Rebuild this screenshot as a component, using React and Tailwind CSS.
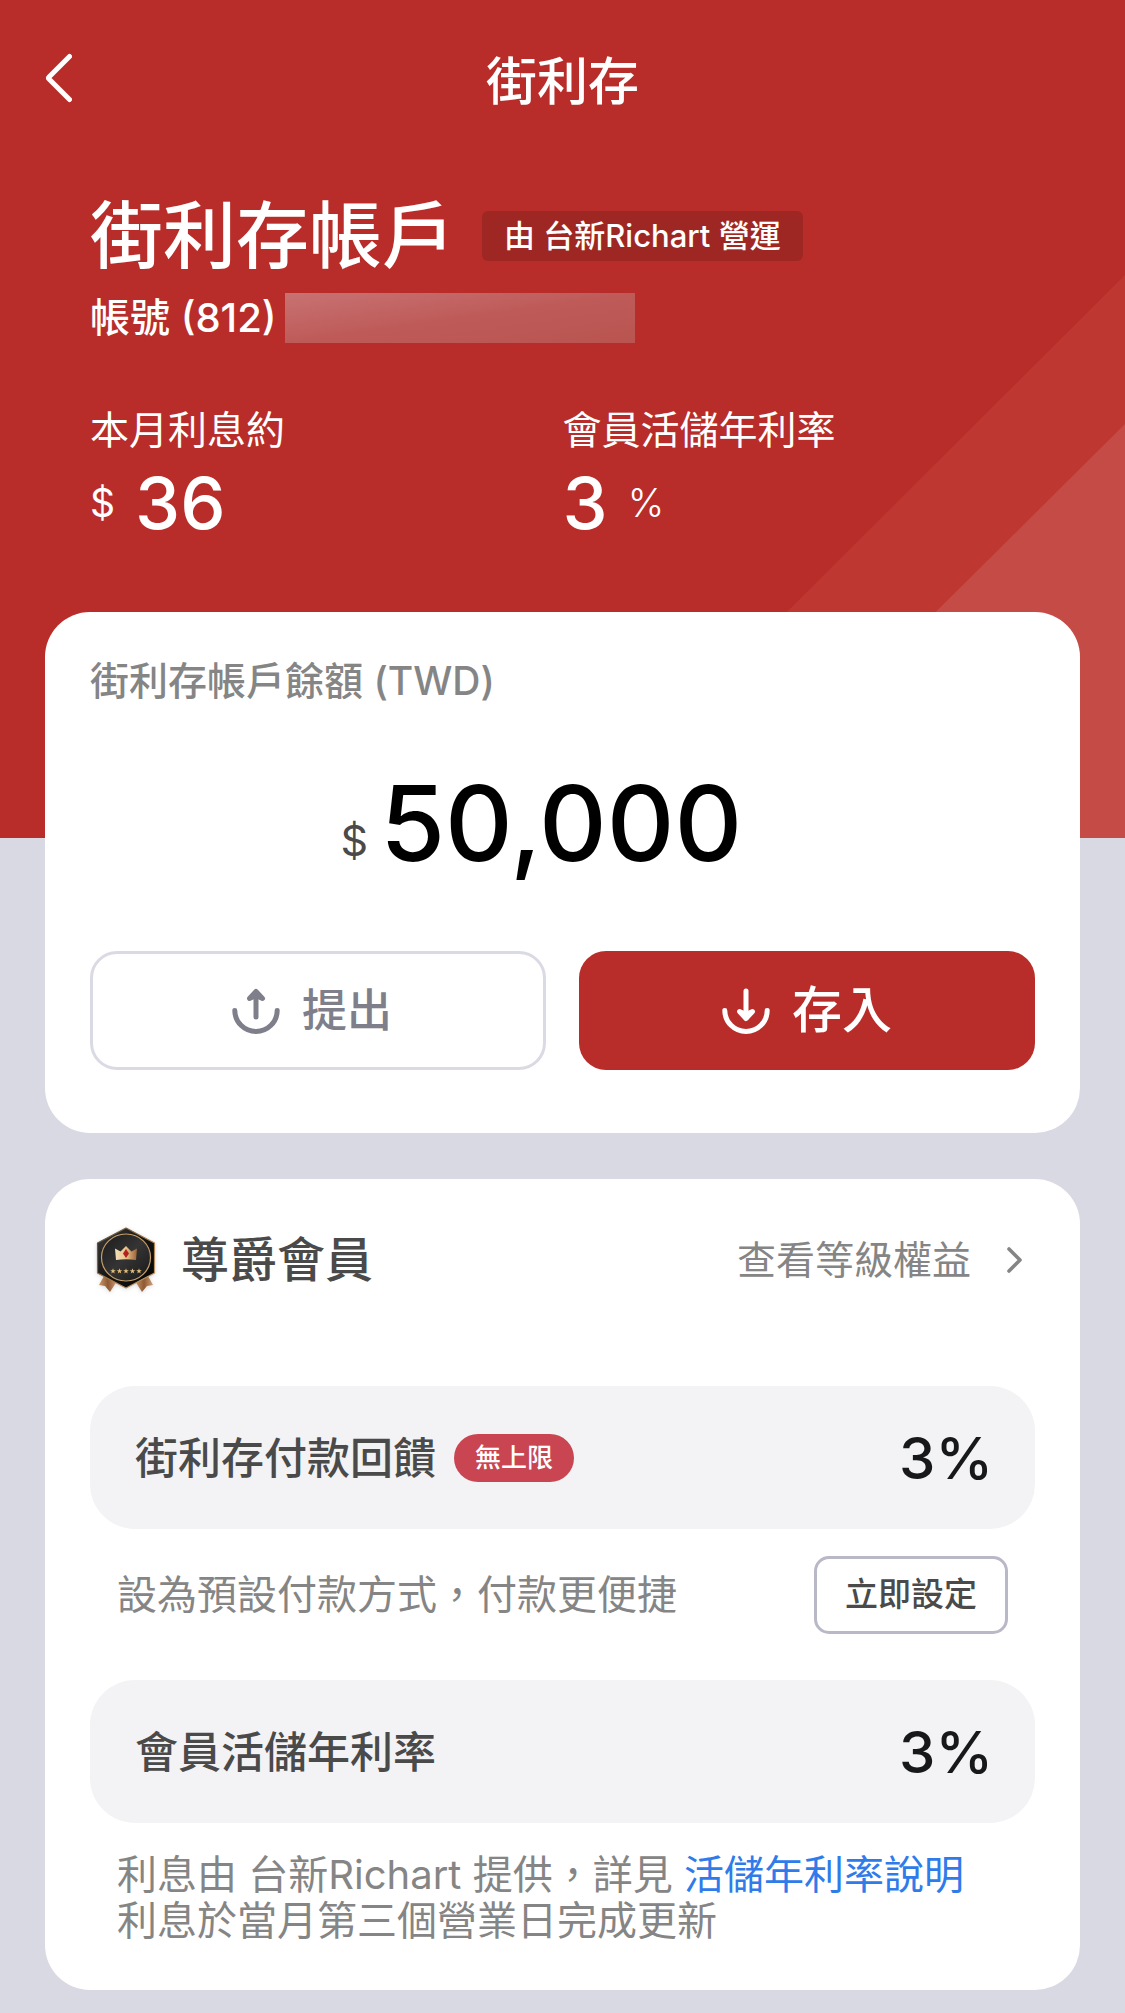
import React from 'react';

const BackIcon = () => (
  <svg viewBox="0 0 28 50" className="w-7 h-[50px]" fill="none" stroke="currentColor" strokeWidth="5" strokeLinecap="round" strokeLinejoin="round" aria-hidden="true">
    <path d="M25.5 3.5 L5 24 Q4 25 5 26 L25.5 46.5" />
  </svg>
);

const ChevronIcon = () => (
  <svg viewBox="0 0 16 26" className="w-4 h-[26px]" fill="none" stroke="currentColor" strokeWidth="3.6" strokeLinecap="round" strokeLinejoin="round" aria-hidden="true">
    <path d="M2 2 L13 13 L2 24" />
  </svg>
);

const WithdrawIcon = () => (
  <svg viewBox="0 0 48 46" className="w-12 h-[46px]" fill="none" stroke="currentColor" strokeWidth="5" strokeLinecap="round" strokeLinejoin="round" aria-hidden="true">
    <path d="M2.8 22.5 A21.2 21 0 0 0 45.2 22.5" />
    <path d="M24 29 V4" />
    <path d="M17.5 10.5 L24 3.5 L30.5 10.5 L24 7.5 Z" />
  </svg>
);

const DepositIcon = () => (
  <svg viewBox="0 0 48 46" className="w-12 h-[46px]" fill="none" stroke="currentColor" strokeWidth="5" strokeLinecap="round" strokeLinejoin="round" aria-hidden="true">
    <path d="M2.8 22.5 A21.2 21 0 0 0 45.2 22.5" />
    <path d="M24 3 V30" />
    <path d="M17.5 23.5 L24 30.5 L30.5 23.5 L24 26.5 Z" />
  </svg>
);

const MemberBadge = () => (
  <svg viewBox="-2 0 68 68" className="w-[68px] h-[68px] drop-shadow-sm" aria-hidden="true">
    <defs>
      <linearGradient id="edge" x1="0" y1="0" x2="1" y2="1">
        <stop offset="0" stopColor="#4b463e" />
        <stop offset="0.5" stopColor="#a27a48" />
        <stop offset="1" stopColor="#c99f66" />
      </linearGradient>
      <linearGradient id="face" x1="0" y1="0" x2="1" y2="1">
        <stop offset="0" stopColor="#3c3c3c" />
        <stop offset="0.5" stopColor="#151515" />
        <stop offset="1" stopColor="#050505" />
      </linearGradient>
      <linearGradient id="disc" x1="0" y1="0" x2="1" y2="1">
        <stop offset="0" stopColor="#1c1c1c" />
        <stop offset="0.5" stopColor="#343434" />
        <stop offset="1" stopColor="#181818" />
      </linearGradient>
      <linearGradient id="crown" x1="0" y1="0" x2="1" y2="0">
        <stop offset="0" stopColor="#f3dfb8" />
        <stop offset="0.5" stopColor="#e7c48d" />
        <stop offset="1" stopColor="#9c6236" />
      </linearGradient>
      <linearGradient id="ribbon" x1="0" y1="0" x2="1" y2="0">
        <stop offset="0" stopColor="#c9966c" />
        <stop offset="0.5" stopColor="#8e5934" />
        <stop offset="1" stopColor="#d0a078" />
      </linearGradient>
    </defs>
    <path d="M12 50 L7 59 L13 60 L18 66 L25 55 Z" fill="url(#ribbon)" />
    <path d="M56 50 L61 59 L55 60 L50 66 L43 55 Z" fill="url(#ribbon)" />
    <path d="M34 2 L62.5 17 V47 L34 62 L5.5 47 V17 Z" fill="url(#face)" stroke="url(#edge)" strokeWidth="1.2" strokeLinejoin="round" />
    <ellipse cx="34" cy="31.5" rx="24.5" ry="23.5" fill="url(#disc)" stroke="#c79f68" strokeWidth="1.2" />
    <path d="M23 22.5 L28.5 25.5 L34 20 L39.5 25.5 L45 22.5 L44 34 Q34 32.5 24 34 Z" fill="url(#crown)" />
    <path d="M34 23 L37 27.5 L34 32 L31 27.5 Z" fill="#b3201f" />
    {[21, 27.5, 34, 40.5, 47].map((x) => (
      <path key={x} transform={`translate(${x} 45)`} d="M0 -2.8 L0.7 -0.8 L2.8 -0.8 L1.1 0.4 L1.7 2.5 L0 1.2 L-1.7 2.5 L-1.1 0.4 L-2.8 -0.8 L-0.7 -0.8 Z" fill="#e5c07a" />
    ))}
  </svg>
);

const RateRow = ({ label, tag, rate }) => (
  <div className="flex items-center justify-between h-[143px] pl-[45px] pr-[42px] rounded-[45px] bg-[#f3f3f5]">
    <div className="flex items-center gap-[18px]">
      <h3 className="text-[43px] leading-[60px] font-medium text-[#4a4a4a]">{label}</h3>
      {tag && (
        <span className="flex items-center h-12 px-[21px] rounded-full bg-[#c94552] text-[26px] font-medium text-white">
          {tag}
        </span>
      )}
    </div>
    <span className="text-[58px] leading-[60px] font-medium text-[#17181a]">{rate}</span>
  </div>
);

const App = () => {
  return (
    <div className="min-h-screen bg-[#d9d9e3] font-['Inter','Noto_Sans_CJK_TC',sans-serif]" lang="zh-Hant">
      {/* Hero */}
      <header className="relative h-[838px] overflow-hidden bg-[#b82d29] text-white">
        <svg viewBox="0 0 565 563" className="absolute right-0 bottom-0 w-[565px] h-[563px]" aria-hidden="true">
          <path d="M0 563 L565 0 V563 Z" fill="#be3731" />
          <path d="M148 563 L565 149 V563 Z" fill="#c54b46" />
        </svg>

        <nav className="relative grid grid-cols-[1fr_auto_1fr] items-center h-[164px] px-11">
          <button type="button" aria-label="返回" className="justify-self-start -mt-2">
            <BackIcon />
          </button>
          <h1 className="text-[51px] font-medium">街利存</h1>
        </nav>

        <div className="relative px-[90px] pt-[30px]">
          <div className="flex items-center gap-[27px]">
            <h2 className="text-[73px] leading-[84px] font-medium">街利存帳戶</h2>
            <span className="flex items-center h-[50px] px-[22px] rounded-md bg-[#9f2723] text-[31px] font-medium">
              由 台新Richart 營運
            </span>
          </div>
          <div className="flex items-center gap-2 mt-[15px] h-[50px]">
            <span className="text-[40px] font-medium">帳號 (812)</span>
            <span className="w-[350px] h-[50px] bg-gradient-to-br from-[#c87273] via-[#be5b59] to-[#b95450]" />
          </div>

          <dl className="grid grid-cols-2 mt-[58px]">
            <div>
              <dt className="text-[39px] leading-[58px]">本月利息約</dt>
              <dd className="flex items-center gap-5 h-[88px]">
                <span className="text-[39px]">$</span>
                <span className="text-[72px] font-medium">36</span>
              </dd>
            </div>
            <div>
              <dt className="text-[39px] leading-[58px]">會員活儲年利率</dt>
              <dd className="flex items-center gap-5 h-[88px]">
                <span className="text-[72px] font-medium">3</span>
                <span className="text-[39px] font-light">%</span>
              </dd>
            </div>
          </dl>
        </div>
      </header>

      <main className="relative flex flex-col gap-[46px] px-[45px] pb-[23px] -mt-[226px]">
        {/* Balance */}
        <section className="px-[45px] pt-[41px] pb-[63px] rounded-[45px] bg-white">
          <h2 className="text-[39px] leading-[56px] font-medium text-[#858585]">街利存帳戶餘額 (TWD)</h2>
          <p className="flex items-end justify-center gap-3 mt-[49px] pr-[42px]">
            <span className="text-[43px] leading-[96px] text-[#4a4a4a]">$</span>
            <span className="text-[105px] leading-[130px] font-medium text-black">50,000</span>
          </p>
          <div className="grid grid-cols-2 gap-[33px] mt-[63px]">
            <button type="button" className="flex items-center justify-center gap-[22px] h-[119px] pr-3 rounded-[27px] border-3 border-[#dadae4] text-[45px] font-medium text-[#7f7f8b]">
              <WithdrawIcon />
              提出
            </button>
            <button type="button" className="flex items-center justify-center gap-[22px] h-[119px] rounded-[27px] bg-[#b82d29] text-[50px] font-medium text-white">
              <DepositIcon />
              存入
            </button>
          </div>
        </section>

        {/* Membership */}
        <section className="px-[45px] pt-[45px] pb-[46px] rounded-[45px] bg-white">
          <div className="flex items-center justify-between h-[72px]">
            <div className="flex items-center gap-[23px]">
              <MemberBadge />
              <h2 className="text-5xl font-medium text-[#4a4a4a]">尊爵會員</h2>
            </div>
            <a href="#benefits" className="flex items-center gap-9 pr-3 text-[39px] text-[#858585]">
              查看等級權益
              <ChevronIcon />
            </a>
          </div>

          <div className="mt-[90px]">
            <RateRow label="街利存付款回饋" tag="無上限" rate="3%" />
          </div>
          <div className="flex items-center justify-between mt-[27px] px-[27px]">
            <p className="text-[40px] text-[#858585]">設為預設付款方式，付款更便捷</p>
            <button type="button" className="h-[78px] px-7 rounded-[15px] border-3 border-[#b9b8c6] text-[33px] font-medium text-[#4a4a4a]">
              立即設定
            </button>
          </div>

          <div className="mt-[46px]">
            <RateRow label="會員活儲年利率" rate="3%" />
          </div>
          <p className="mt-[29px] px-[27px] text-[40px] leading-[46px] text-[#858585]">
            利息由 台新Richart 提供，詳見{' '}
            <a href="#rates" className="text-[#2f7bea]">活儲年利率說明</a>
            <br />
            利息於當月第三個營業日完成更新
          </p>
        </section>
      </main>
    </div>
  );
};

export default App;
